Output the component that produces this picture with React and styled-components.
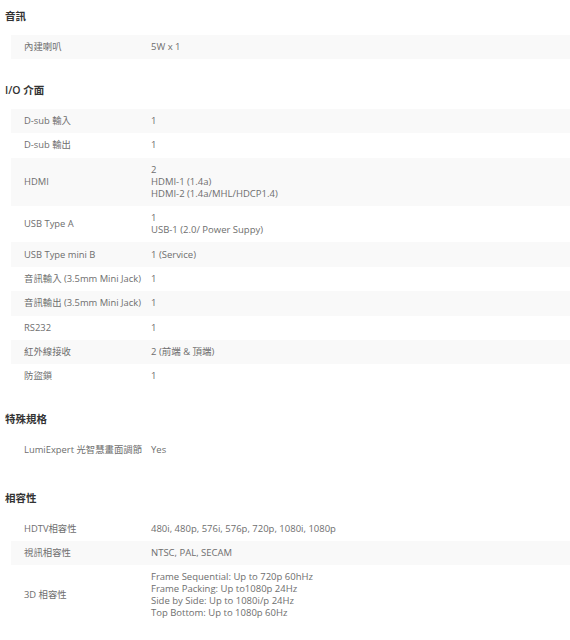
import React from 'react';
import styled, { createGlobalStyle } from 'styled-components';

const GlobalStyle = createGlobalStyle`
  html, body {
    margin: 0;
    padding: 0;
    background: #ffffff;
  }
`;

const Page = styled.div`
  padding: 9px 0 0 5px;
  font-family: 'Open Sans', 'Noto Sans CJK TC', sans-serif;
  color: #6e6e6e;
`;

const Section = styled.section`
  margin-bottom: ${({ gap }) => gap || 23.5}px;
`;

const Heading = styled.h3`
  margin: 0 0 12px 0;
  font-size: 10.5px;
  line-height: 14px;
  font-weight: 600;
  color: #333333;
`;

const Table = styled.div`
  margin-left: 6px;
  display: flex;
  flex-direction: column;
`;

const Row = styled.div`
  display: grid;
  grid-template-columns: 140px 1fr;
  align-items: center;
  padding: 6.2px 0;
  background: ${({ shaded }) => (shaded ? '#f9f9f9' : 'transparent')};
`;

const Label = styled.div`
  padding-left: 13px;
  font-size: 9.4px;
  line-height: 12px;
  white-space: nowrap;
`;

const Value = styled.div`
  font-size: 9.5px;
  line-height: 12px;
`;

const sections = [
  {
    title: '音訊',
    rows: [{ label: '內建喇叭', value: ['5W x 1'], shaded: true }],
  },
  {
    title: 'I/O 介面',
    rows: [
      { label: 'D-sub 輸入', value: ['1'], shaded: true },
      { label: 'D-sub 輸出', value: ['1'] },
      { label: 'HDMI', value: ['2', 'HDMI-1 (1.4a)', 'HDMI-2 (1.4a/MHL/HDCP1.4)'], shaded: true },
      { label: 'USB Type A', value: ['1', 'USB-1 (2.0/ Power Suppy)'] },
      { label: 'USB Type mini B', value: ['1 (Service)'], shaded: true },
      { label: '音訊輸入 (3.5mm Mini Jack)', value: ['1'] },
      { label: '音訊輸出 (3.5mm Mini Jack)', value: ['1'], shaded: true },
      { label: 'RS232', value: ['1'] },
      { label: '紅外線接收', value: ['2 (前端 & 頂端)'], shaded: true },
      { label: '防盜鎖', value: ['1'] },
    ],
  },
  {
    title: '特殊規格',
    gap: 28,
    rows: [{ label: 'LumiExpert 光智慧畫面調節', value: ['Yes'] }],
  },
  {
    title: '相容性',
    rows: [
      { label: 'HDTV相容性', value: ['480i, 480p, 576i, 576p, 720p, 1080i, 1080p'] },
      { label: '視訊相容性', value: ['NTSC, PAL, SECAM'], shaded: true },
      {
        label: '3D 相容性',
        value: [
          'Frame Sequential: Up to 720p 60hHz',
          'Frame Packing: Up to1080p 24Hz',
          'Side by Side: Up to 1080i/p 24Hz',
          'Top Bottom: Up to 1080p 60Hz',
        ],
      },
    ],
  },
];

const App = () => (
  <Page>
    <GlobalStyle />
    {sections.map((section) => (
      <Section key={section.title} gap={section.gap}>
        <Heading>{section.title}</Heading>
        <Table>
          {section.rows.map((row) => (
            <Row key={row.label} shaded={row.shaded}>
              <Label>{row.label}</Label>
              <Value>
                {row.value.map((line) => (
                  <div key={line}>{line}</div>
                ))}
              </Value>
            </Row>
          ))}
        </Table>
      </Section>
    ))}
  </Page>
);

export default App;
